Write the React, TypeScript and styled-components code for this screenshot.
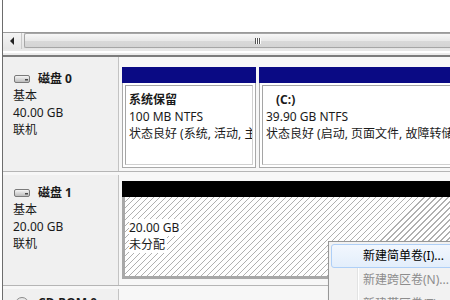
import React from 'react'
import styled, { createGlobalStyle } from 'styled-components'

const Global = createGlobalStyle`
  html, body { margin: 0; padding: 0; background: #ffffff; }
  body {
    font-family: "Noto Sans", "Noto Sans CJK SC", sans-serif;
    font-size: 12px;
    color: #000;
  }
`

const Window = styled.div`
  position: relative;
  width: 450px;
  height: 300px;
  overflow: hidden;
  box-sizing: border-box;
  border-left: 1px solid #6d6d6d;
  margin-left: 2px;
  background: #ffffff;
`

const TopBlank = styled.div`
  height: 32px;
  background: #ffffff;
`

const HScroll = styled.div`
  display: flex;
  height: 16px;
  overflow: hidden;
  border-top: 1px solid #9a9a9a;
  background: linear-gradient(#f1f1f1, #e3e3e3);
`

const ArrowButton = styled.div`
  flex: none;
  width: 18px;
  display: flex;
  align-items: center;
  justify-content: center;
  border-right: 1px solid #c9c9c9;
  background: linear-gradient(#f4f4f4, #e6e6e6);
`

const Thumb = styled.div`
  flex: none;
  width: 460px;
  display: flex;
  align-items: center;
  justify-content: center;
  margin: 0 0 1px 2px;
  border: 1px solid #a6a6a6;
  border-right: none;
  border-radius: 2px 0 0 2px;
  background: linear-gradient(#f7f7f7 0%, #e9e9e9 50%, #d9d9d9 51%, #d4d4d4 100%);
`

const Grip = styled.div`
  display: flex;
  gap: 1px;
  margin-left: 4px;
  span {
    width: 1px;
    height: 6px;
    background: #555;
    box-shadow: 1px 0 0 #fff;
  }
`

const ScrollFoot = styled.div`
  height: 6px;
  background: linear-gradient(#e8e8e8 0 2px, #ffffff 2px 4px, #ececec 4px);
  border-bottom: 2px solid #7c7c7c;
`

const DiskList = styled.div`
  display: flex;
  flex-direction: column;
  gap: 3px;
  background: #f7f7f7;
`

const DiskRow = styled.div<{ $h: number }>`
  display: grid;
  grid-template-columns: 116px 1fr;
  height: ${(p) => p.$h}px;
  border-bottom: 1px solid #b5b5b5;
  background: #f7f7f7;
`

const Label = styled.div<{ $top: number }>`
  background: #f0f0f0;
  border-right: 1px solid #c3c3c3;
  padding: ${(p) => p.$top}px 0 0 10px;
  line-height: 17px;
  color: #1a1a1a;
`

const DiskName = styled.div`
  display: flex;
  align-items: center;
  gap: 8px;
  font-weight: bold;
  padding-left: 1px;
`

const Parts = styled.div<{ $top: number }>`
  display: flex;
  gap: 3px;
  padding: ${(p) => p.$top}px 0 0 3px;
  overflow: hidden;
`

const Part = styled.div<{ $w: number }>`
  flex: none;
  width: ${(p) => p.$w}px;
  display: flex;
  flex-direction: column;
`

const Header = styled.div<{ $color: string }>`
  height: 16px;
  background: ${(p) => p.$color};
`

const Body = styled.div<{ $h: number }>`
  height: ${(p) => p.$h}px;
  box-sizing: border-box;
  border: 1px solid #a9a9a9;
  border-top: none;
  background: #ffffff;
  padding: 2px;
`

const Inner = styled.div`
  height: 100%;
  box-sizing: border-box;
  border: 1px solid #a5a5a5;
  border-right-color: #d0d0d0;
  border-bottom-color: #d0d0d0;
  padding: 5px 0 0 3px;
  line-height: 17px;
  white-space: nowrap;
  overflow: hidden;
  color: #1a1a1a;
`

const Bold = styled.div<{ $indent?: number }>`
  font-weight: bold;
  padding-left: ${(p) => p.$indent || 0}px;
`

const Hatched = styled.div<{ $h: number }>`
  height: ${(p) => p.$h}px;
  box-sizing: border-box;
  border: 3px solid #a8a8a8;
  border-top: none;
  padding: 22px 0 0 4px;
  line-height: 17px;
  background-color: #ffffff;
  background-image: repeating-linear-gradient(
    -45deg,
    #ffffff 0px,
    #ffffff 3.4px,
    #b0b0b0 3.4px,
    #b0b0b0 4.25px
  );
  color: #1a1a1a;
`

const Tag = styled.div`
  display: table;
  background: #ffffff;
  padding-right: 2px;
`

const Menu = styled.div`
  position: absolute;
  left: 325px;
  top: 241px;
  width: 140px;
  padding: 2px;
  background: #f2f2f2;
  border: 1px solid #979797;
  box-shadow: 2px 2px 3px rgba(0, 0, 0, 0.3);
  &::before {
    content: '';
    position: absolute;
    left: 28px;
    top: 2px;
    bottom: 0;
    width: 1px;
    background: #e2e3e3;
    box-shadow: 1px 0 0 #ffffff;
  }
`

const MenuItem = styled.div<{ $active?: boolean; $disabled?: boolean }>`
  position: relative;
  height: 22px;
  line-height: 22px;
  padding-left: 31px;
  white-space: nowrap;
  color: ${(p) => (p.$disabled ? '#8d8d8d' : '#000')};
  border: 1px solid ${(p) => (p.$active ? '#aecff7' : 'transparent')};
  border-radius: 3px;
  background: ${(p) =>
    p.$active ? 'linear-gradient(#f2f7fe, #e3eefb)' : 'transparent'};
`

const DiskIcon = () => (
  <svg width="16" height="8" viewBox="0 0 16 8">
    <defs>
      <linearGradient id="dg" x1="0" y1="0" x2="0" y2="1">
        <stop offset="0" stopColor="#fafafa" />
        <stop offset="1" stopColor="#b8b8b8" />
      </linearGradient>
    </defs>
    <rect x="0.5" y="0.5" width="15" height="7" rx="1.5" fill="url(#dg)" stroke="#7a7a7a" />
    <rect x="11" y="4" width="3" height="1.5" fill="#4a4a4a" />
  </svg>
)

const CdIcon = () => (
  <svg width="16" height="14" viewBox="0 0 16 14">
    <circle cx="8" cy="8" r="6.5" fill="#e8e8e8" stroke="#8a8a8a" />
    <circle cx="8" cy="8" r="2" fill="#ffffff" stroke="#8a8a8a" />
  </svg>
)

const LeftArrow = () => (
  <svg width="5" height="8" viewBox="0 0 5 8">
    <path d="M4 0 L0 4 L4 8 Z" fill="#222" />
  </svg>
)

export default function App() {
  return (
    <Window>
      <Global />
      <TopBlank />
      <HScroll>
        <ArrowButton>
          <LeftArrow />
        </ArrowButton>
        <Thumb>
          <Grip>
            <span />
            <span />
            <span />
          </Grip>
        </Thumb>
      </HScroll>
      <ScrollFoot />
      <DiskList>
        <DiskRow $h={114}>
          <Label $top={13}>
            <DiskName>
              <DiskIcon />
              磁盘 0
            </DiskName>
            <div>基本</div>
            <div>40.00 GB</div>
            <div>联机</div>
          </Label>
          <Parts $top={10}>
            <Part $w={134}>
              <Header $color="#0a0a84" />
              <Body $h={85}>
                <Inner>
                  <Bold>系统保留</Bold>
                  <div>100 MB NTFS</div>
                  <div>状态良好 (系统, 活动, 主分区)</div>
                </Inner>
              </Body>
            </Part>
            <Part $w={240}>
              <Header $color="#0a0a84" />
              <Body $h={85}>
                <Inner>
                  <Bold $indent={10}>(C:)</Bold>
                  <div>39.90 GB NTFS</div>
                  <div>状态良好 (启动, 页面文件, 故障转储, 主分区)</div>
                </Inner>
              </Body>
            </Part>
          </Parts>
        </DiskRow>
        <DiskRow $h={110}>
          <Label $top={9}>
            <DiskName>
              <DiskIcon />
              磁盘 1
            </DiskName>
            <div>基本</div>
            <div>20.00 GB</div>
            <div>联机</div>
          </Label>
          <Parts $top={6}>
            <Part $w={340}>
              <Header $color="#000000" />
              <Hatched $h={82}>
                <Tag>20.00 GB</Tag>
                <Tag>未分配</Tag>
              </Hatched>
            </Part>
          </Parts>
        </DiskRow>
        <DiskRow $h={60}>
          <Label $top={5}>
            <DiskName>
              <CdIcon />
              CD-ROM 0
            </DiskName>
          </Label>
          <div />
        </DiskRow>
      </DiskList>
      <Menu>
        <MenuItem $active>新建简单卷(I)...</MenuItem>
        <MenuItem $disabled>新建跨区卷(N)...</MenuItem>
        <MenuItem $disabled>新建带区卷(T)...</MenuItem>
      </Menu>
    </Window>
  )
}
